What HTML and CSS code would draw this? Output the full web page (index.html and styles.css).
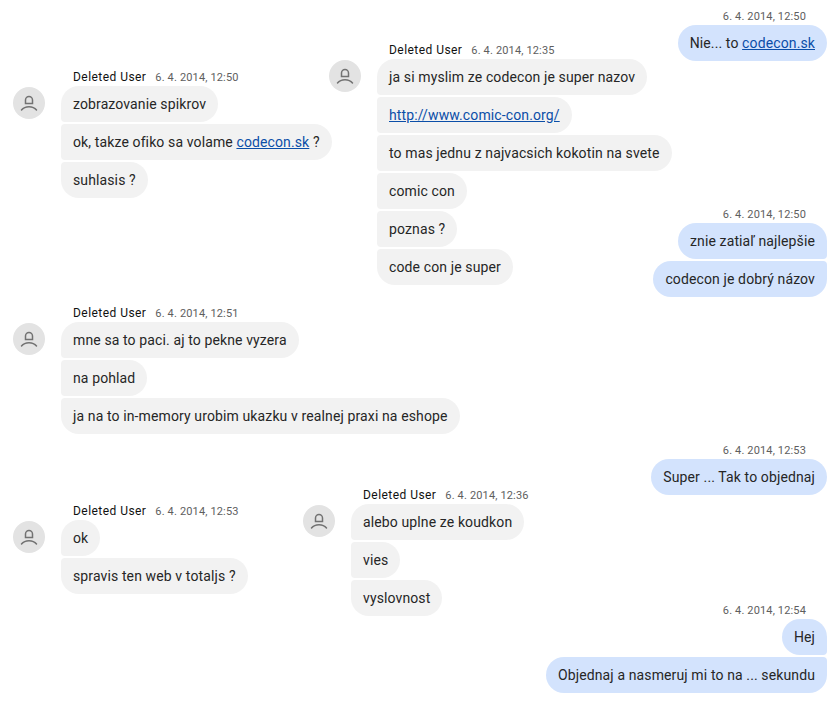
FILE: index.html
```html
<!DOCTYPE html>
<html lang="sk">
<head>
  <meta charset="UTF-8">
  <title>Chat</title>
  <link rel="stylesheet" href="styles.css">
</head>
<body>
  <svg class="icon-defs" width="0" height="0">
    <symbol id="person" viewBox="0 0 20 20">
      <path d="M6.500 10.500V7a3.500 3.500 0 0 1 7 0v3.500z M2.500 17c2-2.500 4.500-3.300 7.500-3.300s5.500.8 7.500 3.300" fill="none" stroke="#727272" stroke-width="1.500" stroke-linecap="round"/>
    </symbol>
  </svg>

  <div class="row row-one">
    <div class="group group-a">
      <div class="avatar"><svg><use href="#person"/></svg></div>
      <div class="messages">
        <div class="meta"><span class="name">Deleted User</span><span class="time">6. 4. 2014, 12:50</span></div>
        <div class="bubble">zobrazovanie spikrov</div>
        <div class="bubble">ok, takze ofiko sa volame <a href="#">codecon.sk</a> ?</div>
        <div class="bubble">suhlasis ?</div>
      </div>
    </div>
    <div class="group group-b">
      <div class="avatar"><svg><use href="#person"/></svg></div>
      <div class="messages">
        <div class="meta"><span class="name">Deleted User</span><span class="time">6. 4. 2014, 12:35</span></div>
        <div class="bubble">ja si myslim ze codecon je super nazov</div>
        <div class="bubble"><a href="#">http://www.comic-con.org/</a></div>
        <div class="bubble">to mas jednu z najvacsich kokotin na svete</div>
        <div class="bubble">comic con</div>
        <div class="bubble">poznas ?</div>
        <div class="bubble">code con je super</div>
      </div>
    </div>
    <div class="own-column">
      <div class="messages own">
        <div class="meta"><span class="time">6. 4. 2014, 12:50</span></div>
        <div class="bubble">Nie... to <a href="#">codecon.sk</a></div>
      </div>
      <div class="messages own own-second">
        <div class="meta"><span class="time">6. 4. 2014, 12:50</span></div>
        <div class="bubble">znie zatiaľ najlepšie</div>
        <div class="bubble">codecon je dobrý názov</div>
      </div>
    </div>
  </div>

  <div class="row row-two">
    <div class="group">
      <div class="avatar"><svg><use href="#person"/></svg></div>
      <div class="messages">
        <div class="meta"><span class="name">Deleted User</span><span class="time">6. 4. 2014, 12:51</span></div>
        <div class="bubble">mne sa to paci. aj to pekne vyzera</div>
        <div class="bubble">na pohlad</div>
        <div class="bubble">ja na to in-memory urobim ukazku v realnej praxi na eshope</div>
      </div>
    </div>
  </div>

  <div class="row row-three">
    <div class="messages own">
      <div class="meta"><span class="time">6. 4. 2014, 12:53</span></div>
      <div class="bubble">Super ... Tak to objednaj</div>
    </div>
  </div>

  <div class="row row-four">
    <div class="group group-c">
      <div class="avatar"><svg><use href="#person"/></svg></div>
      <div class="messages">
        <div class="meta"><span class="name">Deleted User</span><span class="time">6. 4. 2014, 12:53</span></div>
        <div class="bubble">ok</div>
        <div class="bubble">spravis ten web v totaljs ?</div>
      </div>
    </div>
    <div class="group group-d">
      <div class="avatar"><svg><use href="#person"/></svg></div>
      <div class="messages">
        <div class="meta"><span class="name">Deleted User</span><span class="time">6. 4. 2014, 12:36</span></div>
        <div class="bubble">alebo uplne ze koudkon</div>
        <div class="bubble">vies</div>
        <div class="bubble">vyslovnost</div>
      </div>
    </div>
    <div class="messages own own-last">
      <div class="meta"><span class="time">6. 4. 2014, 12:54</span></div>
      <div class="bubble">Hej</div>
      <div class="bubble">Objednaj a nasmeruj mi to na ... sekundu</div>
    </div>
  </div>
</body>
</html>
```

FILE: styles.css
```css
* { box-sizing: border-box; }
body {
  margin: 0;
  height: 703px;
  overflow: hidden;
  background: #fff;
  color: #262626;
  font-family: 'Roboto', 'Liberation Sans', sans-serif;
  font-size: 14px;
  letter-spacing: 0.12px;
}
.icon-defs { position: absolute; }
.row {
  display: flex;
  align-items: flex-start;
  padding: 0 8px 0 13px;
}
.row-one { height: 306px; padding-top: 10px; }
.row-two { height: 138px; }
.row-three { height: 44px; justify-content: flex-end; }
.group {
  flex: none;
  display: flex;
  align-items: flex-start;
  gap: 16px;
}
.group-a { margin-top: 60px; width: 316px; }
.group-b { margin-top: 33px; width: 300px; }
.group-c { margin-top: 16px; width: 290px; }
.group-d { width: 230px; }
.avatar {
  flex: none;
  width: 32px;
  height: 32px;
  margin-top: 17px;
  border-radius: 50%;
  background: #e3e3e3;
  display: flex;
  align-items: center;
  justify-content: center;
}
.avatar svg { width: 20px; height: 20px; }
.messages {
  display: flex;
  flex-direction: column;
  align-items: flex-start;
  gap: 2px;
}
.meta {
  display: flex;
  flex: none;
  align-items: baseline;
  gap: 9px;
  height: 14px;
  padding: 0 12px;
  line-height: 14px;
  white-space: nowrap;
}
.name { font-size: 12px; font-weight: 400; letter-spacing: 0.45px; color: #111; }
.time { font-size: 11px; color: #5e5e5e; letter-spacing: 0.15px; }
.bubble {
  height: 36px;
  padding: 0 12px;
  line-height: 36px;
  white-space: nowrap;
  background: #f2f2f2;
  border-radius: 4px 18px 18px 4px;
}
.bubble:nth-child(2) { border-top-left-radius: 18px; }
.bubble:last-child { border-bottom-left-radius: 18px; }
a { color: #0b4ea8; }
.own { flex: none; align-items: flex-end; }
.own .meta { height: 13px; padding-right: 21px; }
.own .bubble {
  background: #d3e3fd;
  border-radius: 18px 4px 4px 18px;
}
.own .bubble:nth-child(2) { border-top-right-radius: 18px; }
.own .bubble:last-child { border-bottom-right-radius: 18px; }
.own-column {
  margin-left: auto;
  display: flex;
  flex-direction: column;
  align-items: flex-end;
}
.own-second { margin-top: 147px; }
.own-last { margin-left: auto; margin-top: 116px; }
```
